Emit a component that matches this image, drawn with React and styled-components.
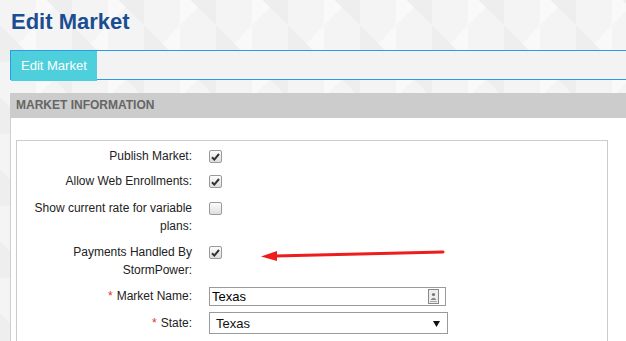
import React from "react";
import styled, { createGlobalStyle } from "styled-components";

const GlobalStyle = createGlobalStyle`
  html, body {
    margin: 0;
    padding: 0;
    height: 100%;
    overflow: hidden;
  }
  body {
    font-family: "Liberation Sans", Arial, sans-serif;
    background-color: #f4f4f4;
    background-image:
      linear-gradient(45deg, #eeeeee 25%, transparent 25%, transparent 75%, #eeeeee 75%),
      linear-gradient(-45deg, #f9f9f9 25%, transparent 25%, transparent 75%, #f9f9f9 75%);
    background-size: 72px 72px;
    background-position: 0 -10px, 36px -10px;
  }
`;

const Page = styled.div`
  position: relative;
  padding: 0 0 0 10px;
  height: 341px;
  overflow: hidden;
`;

const Title = styled.h1`
  margin: 0;
  padding: 10px 0 0 1px;
  height: 50px;
  box-sizing: border-box;
  font-size: 22px;
  font-weight: bold;
  color: #1b4d92;
  line-height: 24px;
`;

const TabBar = styled.div`
  display: flex;
  height: 30px;
  background: #f3f3f3;
  border-top: 1px solid #2a9be8;
  border-bottom: 1px solid #2a9be8;
  border-left: 1px solid #2a9be8;
  box-sizing: border-box;
`;

const Tab = styled.div`
  background: ${(p) => (p.active ? "#4ecfdc" : "transparent")};
  color: #fff;
  font-size: 13px;
  line-height: 29px;
  padding: 0 10px;
  height: 30px;
  margin-bottom: -1px;
`;

const SectionHeader = styled.div`
  margin-top: 13px;
  height: 25px;
  background: #cccccc;
  color: #666;
  font-size: 12px;
  font-weight: bold;
  line-height: 25px;
  padding-left: 6px;
`;

const Panel = styled.div`
  background: #fff;
  border-left: 1px solid #cfcfcf;
  padding: 22px 18px 0 5px;
  height: 223px;
`;

const FormBox = styled.div`
  border: 1px solid #cccccc;
  border-bottom: none;
  padding-top: 6px;
  height: 201px;
  display: flex;
  flex-direction: column;
  gap: 8px;
`;

const Row = styled.div`
  display: grid;
  grid-template-columns: 175px 1fr;
  column-gap: 17px;
  align-items: start;
  margin-top: ${(p) => p.shift || 0}px;
`;

const Label = styled.div`
  text-align: right;
  font-size: 12px;
  line-height: 18px;
  color: #222;
  padding-top: ${(p) => p.pad || 0}px;
`;

const Req = styled.span`
  color: #e0322f;
  margin-right: 4px;
`;

const CheckBox = styled.span`
  display: inline-flex;
  align-items: center;
  justify-content: center;
  width: 11px;
  height: 11px;
  margin-top: 3px;
  border: 1px solid #9a9a9a;
  border-radius: 2px;
  background: linear-gradient(#fdfdfd, #dedede);
`;

const TextInput = styled.div`
  display: flex;
  align-items: center;
  justify-content: space-between;
  width: 237px;
  height: 19px;
  box-sizing: border-box;
  border: 1px solid #9a9a9a;
  padding: 0 6px 0 2px;
  font-size: 13px;
  color: #000;
  background: #fff;
`;

const Select = styled.div`
  display: flex;
  align-items: center;
  justify-content: space-between;
  width: 239px;
  height: 22px;
  box-sizing: border-box;
  border: 1px solid #9a9a9a;
  padding: 0 7px 0 6px;
  font-size: 13px;
  color: #111;
  background: #fff;
`;

const Arrow = styled.svg`
  position: absolute;
  left: 255px;
  top: 244px;
`;

const Check = ({ on }) => (
  <CheckBox>
    {on && (
      <svg width="9" height="8" viewBox="0 0 9 8">
        <path d="M1 4.2 L3.3 6.6 L8 1" fill="none" stroke="#333" strokeWidth="2" />
      </svg>
    )}
  </CheckBox>
);

const ContactIcon = () => (
  <svg width="11" height="15" viewBox="0 0 11 15">
    <rect x="0.5" y="0.5" width="10" height="14" fill="#eee" stroke="#888" />
    <circle cx="5.5" cy="5.5" r="1.6" fill="#777" />
    <path d="M2.5 11 Q5.5 6.5 8.5 11 Z" fill="#888" />
    <rect x="2" y="12" width="7" height="1" fill="#aaa" />
  </svg>
);

const Caret = () => (
  <svg width="7" height="7" viewBox="0 0 7 7">
    <path d="M0 1 L7 1 L3.5 7 Z" fill="#111" />
  </svg>
);

export default function App() {
  return (
    <>
      <GlobalStyle />
      <Page>
        <Title>Edit Market</Title>
        <TabBar>
          <Tab active>Edit Market</Tab>
        </TabBar>
        <SectionHeader>MARKET INFORMATION</SectionHeader>
        <Panel>
          <FormBox>
            <Row>
              <Label>Publish Market:</Label>
              <Check on />
            </Row>
            <Row shift={-1}>
              <Label>Allow Web Enrollments:</Label>
              <Check on />
            </Row>
            <Row shift={1}>
              <Label>
                Show current rate for variable
                <br />
                plans:
              </Label>
              <Check />
            </Row>
            <Row>
              <Label>
                Payments Handled By
                <br />
                StormPower:
              </Label>
              <Check on />
            </Row>
            <Row>
              <Label>
                <Req>*</Req>Market Name:
              </Label>
              <TextInput>
                <span>Texas</span>
                <ContactIcon />
              </TextInput>
            </Row>
            <Row shift={-2}>
              <Label pad={2}>
                <Req>*</Req>State:
              </Label>
              <Select>
                <span>Texas</span>
                <Caret />
              </Select>
            </Row>
          </FormBox>
        </Panel>
        <Arrow width="195" height="20" viewBox="0 0 195 20">
          <path d="M20 12 L188 8" stroke="#ee1c1c" strokeWidth="3" strokeLinecap="round" />
          <path d="M6 12.5 L22 7 L22 17 Z" fill="#ee1c1c" />
        </Arrow>
      </Page>
    </>
  );
}
